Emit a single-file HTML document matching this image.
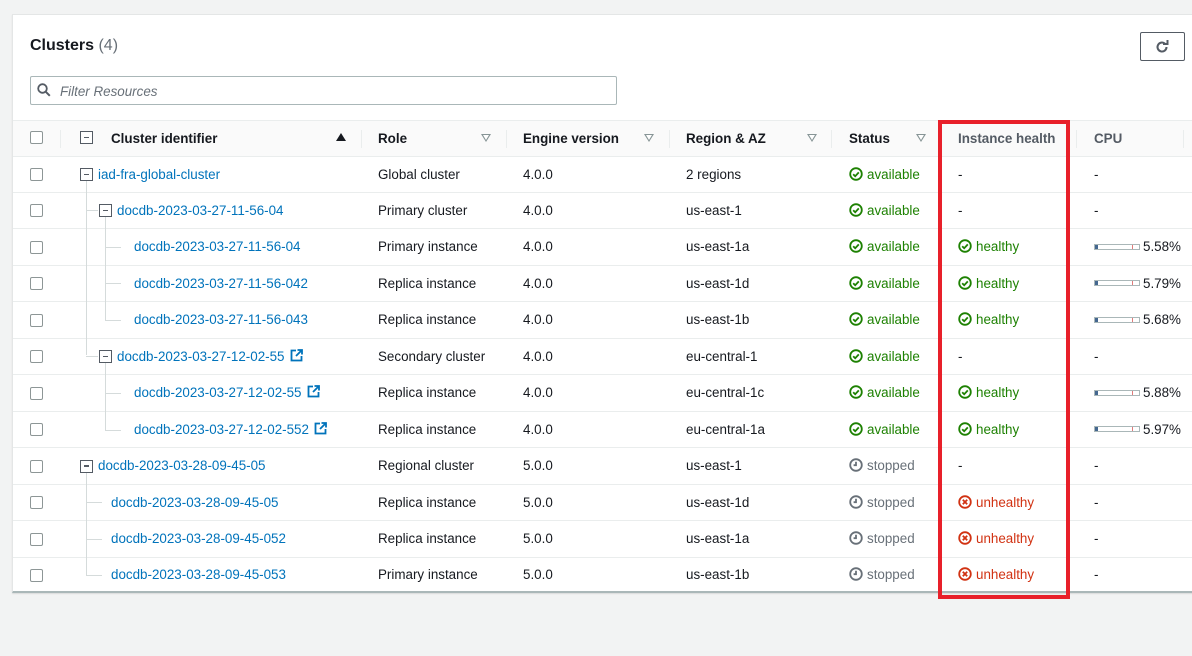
<!DOCTYPE html>
<html><head><meta charset="utf-8"><style>
*{box-sizing:border-box;margin:0;padding:0}
body{width:1192px;height:656px;background:#f2f3f3;font-family:"Liberation Sans",Arial,sans-serif;font-size:13.4px;color:#16191f;position:relative;overflow:hidden}
.panel{position:absolute;left:12px;top:14px;width:1190px;height:579px;background:#fff;border:1px solid #e4e6e6;border-bottom:2px solid #aab7b8;box-shadow:0 1px 1px rgba(0,0,0,.1)}
.a{position:absolute;white-space:nowrap}
.row{position:absolute;left:13px;width:1180px;height:36.45px;border-top:1px solid #eaeded}
.cb{position:absolute;width:13px;height:13px;border:1px solid #8d9696;border-radius:2px;background:#fff}
.box{position:absolute;width:13px;height:13px;border:1.5px solid #545b64;background:#fff}
.box:after{content:"";position:absolute;left:2.5px;top:4.5px;width:5px;height:1.5px;background:#545b64}
.link{color:#0073bb}
.hd{font-weight:bold;color:#16191f}
.sep{position:absolute;top:130px;width:1px;height:18px;background:#eaeded}
.tri{position:absolute;top:134px;width:0;height:0;border-left:5px solid transparent;border-right:5px solid transparent;border-top:8px solid #879596}
.tri:after{content:"";position:absolute;left:-3px;top:-7px;border-left:3px solid transparent;border-right:3px solid transparent;border-top:5px solid #fff}
.ok{color:#1d8102}.st{color:#687078}.bad{color:#d13212}
.vl{position:absolute;width:1px;background:#d5dbdb}.hl{position:absolute;height:1px;background:#d5dbdb}
.bar{position:absolute;width:46px;height:6px;border:1px solid #aab7b8;background:#fff}
.bar:before{content:"";position:absolute;left:0;top:0;width:3px;height:4px;background:#44678f}
.bar:after{content:"";position:absolute;left:37px;top:0;width:1px;height:4px;background:#e07b7b}
svg{position:absolute}
</style></head><body>
<div class="panel"></div>
<div class="a" style="left:30px;top:37px;font-size:16px;font-weight:bold">Clusters <span style="color:#687078;font-weight:normal">(4)</span></div>
<div class="a" style="left:1140px;top:32px;width:45px;height:29px;border:1px solid #545b64;border-radius:2px;background:#fff"></div>
<svg style="left:1153px;top:38px" width="18" height="18" viewBox="0 0 18 18"><path d="M13.5 9a4.5 4.5 0 1 1-1.6-3.4" fill="none" stroke="#545b64" stroke-width="2"/><path d="M10 4h4.5v-4" fill="none" stroke="#545b64" stroke-width="2" transform="translate(0 2)"/></svg>
<div class="a" style="left:30px;top:76px;width:587px;height:29px;border:1px solid #aab7b8;border-radius:2px;background:#fff"></div>
<svg style="left:37px;top:83px" width="14" height="14" viewBox="0 0 14 14"><circle cx="5.5" cy="5.5" r="4.3" fill="none" stroke="#545b64" stroke-width="1.8"/><path d="M8.8 8.8l4 4" stroke="#545b64" stroke-width="2"/></svg>
<div class="a" style="left:60px;top:84px;font-style:italic;color:#687078">Filter Resources</div>
<div class="a" style="left:13px;top:120px;width:1180px;height:36px;background:#fafafa;border-top:1px solid #eaeded"></div>
<div class="cb" style="left:30px;top:131px"></div>
<div class="sep" style="left:60px"></div>
<div class="box" style="left:80px;top:131px"></div>
<div class="a hd" style="left:111px;top:131px">Cluster identifier</div>
<div class="a" style="left:336px;top:133px;border-left:5px solid transparent;border-right:5px solid transparent;border-bottom:8px solid #16191f"></div>
<div class="sep" style="left:361px"></div>
<div class="a hd" style="left:378px;top:131px">Role</div><div class="tri" style="left:481px"></div>
<div class="sep" style="left:506px"></div>
<div class="a hd" style="left:523px;top:131px">Engine version</div><div class="tri" style="left:644px"></div>
<div class="sep" style="left:669px"></div>
<div class="a hd" style="left:686px;top:131px">Region &amp; AZ</div><div class="tri" style="left:807px"></div>
<div class="sep" style="left:831px"></div>
<div class="a hd" style="left:849px;top:131px">Status</div><div class="tri" style="left:916px"></div>
<div class="sep" style="left:941px"></div>
<div class="a hd" style="left:958px;top:131px;color:#545b64">Instance health</div>
<div class="sep" style="left:1076px"></div>
<div class="a hd" style="left:1094px;top:131px;color:#545b64">CPU</div>
<div class="sep" style="left:1183px"></div>

<div class="row" style="top:155.5px"></div><div class="row" style="top:192px"></div><div class="row" style="top:228.4px"></div><div class="row" style="top:264.9px"></div><div class="row" style="top:301.3px"></div><div class="row" style="top:337.8px"></div><div class="row" style="top:374.2px"></div><div class="row" style="top:410.7px"></div><div class="row" style="top:447.1px"></div><div class="row" style="top:483.6px"></div><div class="row" style="top:520px"></div><div class="row" style="top:556.5px"></div>

<div class="vl" style="left:86px;top:180px;height:175px"></div>
<div class="hl" style="left:86px;top:210px;width:12px"></div>
<div class="hl" style="left:86px;top:356px;width:12px"></div>
<div class="vl" style="left:105px;top:216px;height:104px"></div>
<div class="hl" style="left:105px;top:247px;width:16px"></div><div class="hl" style="left:105px;top:283px;width:16px"></div><div class="hl" style="left:105px;top:320px;width:16px"></div>
<div class="vl" style="left:105px;top:362px;height:68px"></div>
<div class="hl" style="left:105px;top:393px;width:16px"></div><div class="hl" style="left:105px;top:430px;width:16px"></div>
<div class="vl" style="left:86px;top:472px;height:103px"></div>
<div class="hl" style="left:86px;top:502px;width:16px"></div><div class="hl" style="left:86px;top:539px;width:16px"></div><div class="hl" style="left:86px;top:575px;width:16px"></div>

<div id="c"></div>
<script>
var R=[
[0,1,"iad-fra-global-cluster",0,"Global cluster","4.0.0","2 regions","a","-","-"],
[1,1,"docdb-2023-03-27-11-56-04",0,"Primary cluster","4.0.0","us-east-1","a","-","-"],
[2,0,"docdb-2023-03-27-11-56-04",0,"Primary instance","4.0.0","us-east-1a","a","h","5.58%"],
[2,0,"docdb-2023-03-27-11-56-042",0,"Replica instance","4.0.0","us-east-1d","a","h","5.79%"],
[2,0,"docdb-2023-03-27-11-56-043",0,"Replica instance","4.0.0","us-east-1b","a","h","5.68%"],
[1,1,"docdb-2023-03-27-12-02-55",1,"Secondary cluster","4.0.0","eu-central-1","a","-","-"],
[2,0,"docdb-2023-03-27-12-02-55",1,"Replica instance","4.0.0","eu-central-1c","a","h","5.88%"],
[2,0,"docdb-2023-03-27-12-02-552",1,"Replica instance","4.0.0","eu-central-1a","a","h","5.97%"],
[0,1,"docdb-2023-03-28-09-45-05",0,"Regional cluster","5.0.0","us-east-1","s","-","-"],
[3,0,"docdb-2023-03-28-09-45-05",0,"Replica instance","5.0.0","us-east-1d","s","u","-"],
[3,0,"docdb-2023-03-28-09-45-052",0,"Replica instance","5.0.0","us-east-1a","s","u","-"],
[3,0,"docdb-2023-03-28-09-45-053",0,"Primary instance","5.0.0","us-east-1b","s","u","-"]];
var okI='<svg width="14" height="14" viewBox="0 0 14 14" style="position:static;vertical-align:-2px;margin-right:4px"><circle cx="7" cy="7" r="5.8" fill="none" stroke="#1d8102" stroke-width="1.8"/><path d="M4.2 7.2l2 2 3.6-3.8" fill="none" stroke="#1d8102" stroke-width="1.8"/></svg>';
var stI='<svg width="14" height="14" viewBox="0 0 14 14" style="position:static;vertical-align:-2px;margin-right:4px"><circle cx="7" cy="7" r="5.8" fill="none" stroke="#687078" stroke-width="1.8"/><path d="M7 3.8v3.4H4.6" fill="none" stroke="#687078" stroke-width="1.8"/></svg>';
var bdI='<svg width="14" height="14" viewBox="0 0 14 14" style="position:static;vertical-align:-2px;margin-right:4px"><circle cx="7" cy="7" r="5.8" fill="none" stroke="#d13212" stroke-width="1.8"/><path d="M4.8 4.8l4.4 4.4M9.2 4.8l-4.4 4.4" stroke="#d13212" stroke-width="1.8"/></svg>';
var ext='<svg width="13" height="13" viewBox="0 0 13 13" style="position:static;vertical-align:-1px;margin-left:5px"><path d="M6 1.5H1.5v10h10V7" fill="none" stroke="#0073bb" stroke-width="1.8"/><path d="M7.5 1h4.5v4.5M12 1L6 7" fill="none" stroke="#0073bb" stroke-width="1.8"/></svg>';
var h='';
R.forEach(function(r,i){
 var cy=174+i*36.45, t=cy-7.5;
 h+='<div class="cb" style="left:30px;top:'+(cy-6)+'px"></div>';
 var bx=[80,99,0,0][r[0]], tx=[98,117,134,111][r[0]];
 if(r[1]) h+='<div class="box" style="left:'+bx+'px;top:'+(cy-6)+'px"></div>';
 h+='<div class="a link" style="left:'+tx+'px;top:'+t+'px">'+r[2]+(r[3]?ext:'')+'</div>';
 h+='<div class="a" style="left:378px;top:'+t+'px">'+r[4]+'</div>';
 h+='<div class="a" style="left:523px;top:'+t+'px">'+r[5]+'</div>';
 h+='<div class="a" style="left:686px;top:'+t+'px">'+r[6]+'</div>';
 h+='<div class="a '+(r[7]=='a'?'ok':'st')+'" style="left:849px;top:'+t+'px">'+(r[7]=='a'?okI+'available':stI+'stopped')+'</div>';
 var hv=r[8]=='h'?'<span class="ok">'+okI+'healthy</span>':r[8]=='u'?'<span class="bad">'+bdI+'unhealthy</span>':'-';
 h+='<div class="a" style="left:958px;top:'+t+'px">'+hv+'</div>';
 if(r[9]=='-') h+='<div class="a" style="left:1094px;top:'+t+'px">-</div>';
 else h+='<div class="bar" style="left:1094px;top:'+(cy-3)+'px"></div><div class="a" style="left:1143px;top:'+t+'px">'+r[9]+'</div>';
});
document.getElementById('c').innerHTML=h;
</script>
<div class="a" style="left:938px;top:120px;width:132px;height:479px;border:4px solid #e8202a"></div>
</body></html>
